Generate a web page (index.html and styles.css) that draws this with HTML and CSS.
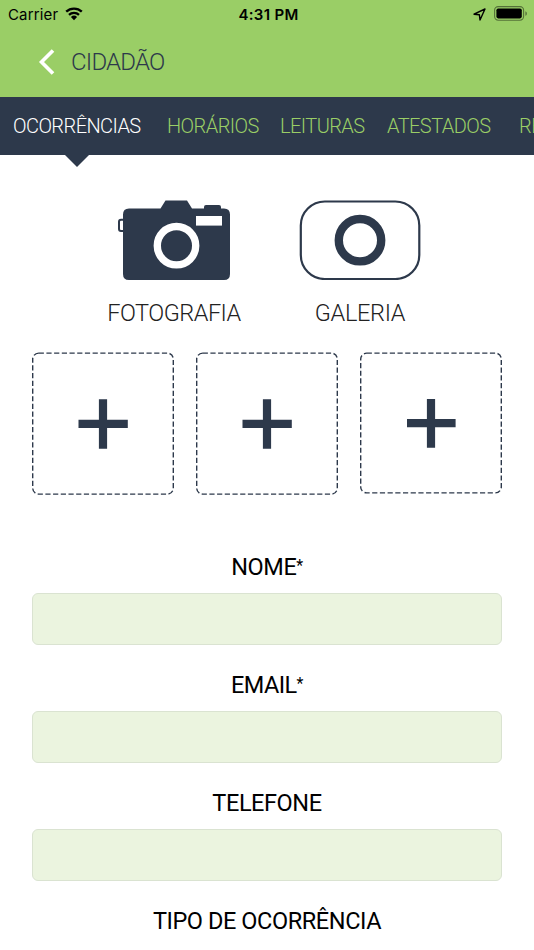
FILE: index.html
```html
<!DOCTYPE html>
<html lang="pt">
<head>
  <meta charset="UTF-8">
  <meta name="viewport" content="width=device-width, initial-scale=1.0">
  <title>Cidadão</title>
  <link rel="stylesheet" href="styles.css">
</head>
<body>
  <header class="header">
    <div class="status">
      <div class="status-left">
        <span class="carrier">Carrier</span>
        <svg class="wifi" width="18" height="14" viewBox="0 0 18 14">
          <path d="M1.2 4.7a11.2 11.2 0 0 1 15.6 0M4 7.8a7.2 7.2 0 0 1 10 0" fill="none" stroke="#000" stroke-width="2.3"/>
          <path d="M9 13.2 5.9 10a4.5 4.5 0 0 1 6.2 0z"/>
        </svg>
      </div>
      <span class="time">4:31 PM</span>
      <div class="status-right">
        <svg width="13" height="13" viewBox="0 0 13 13">
          <path d="M1 6.2 12 1 7 12 6.4 6.8z" fill="none" stroke="#000" stroke-width="1.4" stroke-linejoin="round"/>
        </svg>
        <svg class="battery" width="34" height="15" viewBox="0 0 34 15">
          <rect x=".6" y=".6" width="29" height="13.6" rx="3.6" fill="none" stroke="#000" stroke-opacity=".45" stroke-width="1.1"/>
          <rect x="2.4" y="2.4" width="25.4" height="10" rx="1.8"/>
          <path d="M31.4 5.2c2 .8 2 3.8 0 4.6z" fill-opacity=".45"/>
        </svg>
      </div>
    </div>
    <div class="nav">
      <svg class="back" width="18" height="28" viewBox="0 0 18 28">
        <path d="M15 2.5 3.5 14 15 25.5" fill="none" stroke="#fff" stroke-width="3.6"/>
      </svg>
      <h1 class="title">CIDADÃO</h1>
    </div>
  </header>

  <nav class="tabs">
    <a class="tab tab-active">OCORRÊNCIAS</a>
    <a class="tab">HORÁRIOS</a>
    <a class="tab">LEITURAS</a>
    <a class="tab">ATESTADOS</a>
    <a class="tab">RE</a>
  </nav>

  <main class="content">
    <div class="sources">
      <div class="source">
        <svg class="camera" width="122" height="80" viewBox="0 0 122 80">
          <path d="M16 8.5H42.5L47.500 0.500H69L74 8.500H86V7q0-2 2-2H101q2 0 2 2V8.500H106q6 0 6 6V74q0 6-6 6H11q-6 0-6-6V14.500q0-6 6-6z" fill="#2d394b"/>
          <path d="M5 19.800H3q-2 0-2 2V29q0 2 2 2H5" fill="none" stroke="#2d394b" stroke-width="2"/>
          <rect x="78" y="16" width="26" height="9.600" fill="#fff"/>
          <circle cx="58.500" cy="45.700" r="19.200" fill="none" stroke="#fff" stroke-width="7.400"/>
        </svg>
        <span class="source-name">FOTOGRAFIA</span>
      </div>
      <div class="source">
        <svg width="122" height="80" viewBox="0 0 122 80">
          <rect x="1.800" y="1.500" width="118.500" height="77.500" rx="24" fill="none" stroke="#2d394b" stroke-width="2.200"/>
          <circle cx="61" cy="40.200" r="21.200" fill="none" stroke="#2d394b" stroke-width="8.400"/>
        </svg>
        <span class="source-name galeria">GALERIA</span>
      </div>
    </div>

    <div class="slots">
      <svg class="slot" width="142" height="143" viewBox="0 0 142 143">
        <rect class="dash" x=".7" y="1.100" width="140.600" height="141" rx="6"/>
        <path class="plus" d="M46.500 71.900H95.800M71 47.200V96.700"/>
      </svg>
      <svg class="slot" width="142" height="143" viewBox="0 0 142 143">
        <rect class="dash" x=".7" y="1.100" width="140.600" height="141" rx="6"/>
        <path class="plus" d="M46.500 71.900H95.800M71 47.200V96.700"/>
      </svg>
      <svg class="slot" width="142" height="143" viewBox="0 0 142 143">
        <rect class="dash" x=".7" y="1.100" width="140.600" height="139.800" rx="6"/>
        <path class="plus" d="M47 71.200H95.600M71 47V95.700"/>
      </svg>
    </div>

    <form class="form">
      <label class="label" for="nome">NOME<span class="req">*</span></label>
      <input class="input" type="text" id="nome">

      <label class="label email" for="email">EMAIL<span class="req">*</span></label>
      <input class="input" type="text" id="email">

      <label class="label" for="telefone">TELEFONE</label>
      <input class="input" type="text" id="telefone">

      <label class="label">TIPO DE OCORRÊNCIA</label>
    </form>
  </main>
</body>
</html>
```
FILE: styles.css
```css
* {
  box-sizing: border-box;
}
body {
  margin: 0;
  height: 950px;
  overflow: hidden;
  background: #fff;
  font-family: Roboto, sans-serif;
}
svg {
  display: block;
  flex: none;
}
.header {
  height: 97px;
  background: #9ace66;
}
.status {
  display: grid;
  grid-template-columns: 1fr auto 1fr;
  align-items: center;
  height: 28px;
  padding: 0 7px 0 8px;
  font-family: Inter, sans-serif;
  font-size: 15px;
  color: #000;
}
.status-left, .status-right {
  display: flex;
  align-items: center;
}
.status-left {
  gap: 7px;
}
.status-right {
  justify-content: flex-end;
  gap: 8px;
}
.carrier {
  letter-spacing: 0.15px;
}
.wifi {
  margin-top: -1px;
}
.battery {
  margin: -2px -1px 0 0;
}
.time {
  padding-left: 2px;
  font-weight: 600;
  letter-spacing: 0.3px;
}
.nav {
  display: flex;
  align-items: center;
  gap: 15px;
  height: 68px;
  padding-left: 38px;
}
.title {
  margin: 0;
  font-size: 24px;
  font-weight: 300;
  letter-spacing: -0.8px;
  color: #2d394b;
}
.tabs {
  position: relative;
  display: grid;
  grid-template-columns: 154px 113px 107px 132px 1fr;
  align-items: center;
  height: 58px;
  padding-left: 13px;
  background: #2d394b;
}
/* pointer under the active tab */
.tabs::after {
  content: "";
  position: absolute;
  left: 65px;
  top: 58px;
  border: 12.5px solid transparent;
  border-top-color: #2d394b;
  border-bottom: 0;
}
.tab {
  min-width: 0;
  overflow: hidden;
  font-size: 20px;
  font-weight: 300;
  letter-spacing: -0.57px;
  color: #9ace66;
  white-space: nowrap;
}
.tab-active {
  color: #fff;
}
.content {
  padding: 45px 32px 0;
}
.sources {
  display: flex;
  justify-content: center;
  gap: 44px;
}
.source {
  display: flex;
  flex-direction: column;
  align-items: center;
  gap: 18px;
  width: 142px;
}
.camera {
  margin-left: 10px;
}
.source-name {
  font-size: 23.5px;
  font-weight: 300;
  line-height: 30px;
  letter-spacing: -0.5px;
  color: #222;
}
.galeria {
  letter-spacing: -0.3px;
}
.slots {
  display: flex;
  justify-content: space-between;
  margin-top: 24px;
}
.dash {
  fill: none;
  stroke: #2d394b;
  stroke-width: 1.4;
  stroke-dasharray: 5.2 2.5;
}
.plus {
  fill: none;
  stroke: #2d394b;
  stroke-width: 8.2;
}
.form {
  display: flex;
  flex-direction: column;
  margin-top: 57px;
}
.label {
  height: 41px;
  font-size: 23.5px;
  line-height: 30px;
  letter-spacing: -0.42px;
  text-align: center;
  color: #000;
}
.email {
  letter-spacing: -0.6px;
}
.req {
  font-size: 16px;
  vertical-align: 4px;
  line-height: 1;
}
.input {
  height: 52px;
  margin: 0 0 25px;
  padding: 0 12px;
  border: 1px solid #dae3d1;
  border-radius: 6px;
  background: #ebf4df;
  font-size: 20px;
}
```
